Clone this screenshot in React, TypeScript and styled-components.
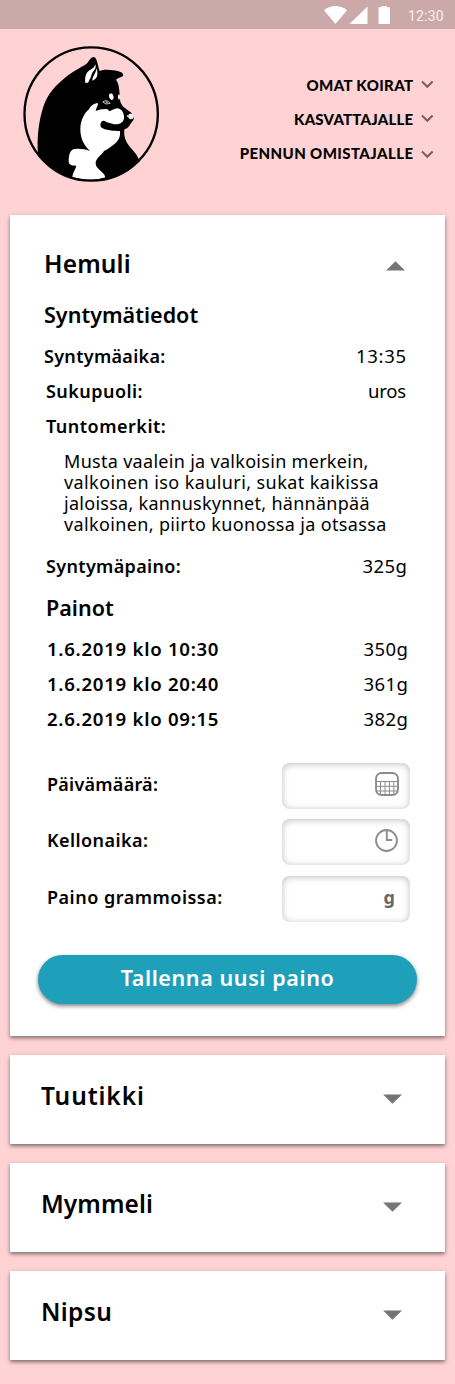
import React from "react";
import styled, { createGlobalStyle } from "styled-components";

const GlobalStyle = createGlobalStyle`
  * { box-sizing: border-box; }
  body {
    margin: 0;
    background: #ffd3d3;
    color: #000;
    font-family: "Noto Sans", "Open Sans", sans-serif;
  }
`;

const Page = styled.div`
  width: 455px;
  height: 1384px;
  background: #ffd3d3;
  overflow: hidden;
`;

const StatusBar = styled.div`
  height: 29px;
  background: #cba9a8;
  display: flex;
  align-items: flex-start;
  justify-content: flex-end;
  padding-right: 11px;
`;

const Clock = styled.span`
  width: 36px;
  margin-left: 16px;
  color: #f7efef;
  font: 400 14px/32px Roboto, sans-serif;
  letter-spacing: 0.2px;
  white-space: nowrap;
`;

const Header = styled.header`
  height: 186px;
  display: flex;
  justify-content: space-between;
  padding: 11px 21px 0 15px;
`;

const Nav = styled.nav`
  display: flex;
  flex-direction: column;
  align-items: flex-end;
  padding-top: 28px;
`;

const NavLink = styled.a<{ $track: number }>`
  display: flex;
  align-items: center;
  gap: 7.6px;
  height: 34px;
  font: 900 15px/34px Lato, sans-serif;
  letter-spacing: ${(p) => p.$track}px;
  white-space: nowrap;
`;

const Stack = styled.main`
  display: flex;
  flex-direction: column;
  gap: 19px;
  padding: 0 10px;
`;

const Card = styled.section<{ $open?: boolean }>`
  height: ${(p) => (p.$open ? 821 : 89)}px;
  padding: ${(p) => (p.$open ? "29px 28px 0" : "21px 43px 0 31px")};
  background: #fff;
  box-shadow: 0 2px 4px rgba(0, 0, 0, 0.5);
`;

const CardHead = styled.div<{ $open?: boolean }>`
  display: flex;
  justify-content: space-between;
  align-items: center;
  height: 40px;
  padding: ${(p) => (p.$open ? "0 12px 0 6px" : "0")};

  svg {
    margin-top: ${(p) => (p.$open ? 3 : 6)}px;
  }
`;

const Title = styled.h2<{ $track: number }>`
  margin: 0;
  font-size: 24.5px;
  line-height: 40px;
  font-weight: 600;
  letter-spacing: ${(p) => p.$track}px;
`;

const Section = styled.h3<{ $inset: number; $top: number }>`
  margin: ${(p) => p.$top}px 0 7px;
  padding-left: ${(p) => p.$inset}px;
  font-size: 21.5px;
  line-height: 34px;
  font-weight: 600;
  letter-spacing: 0.02px;
`;

const Row = styled.div<{ $inset: number; $end: number }>`
  display: flex;
  justify-content: space-between;
  height: 34px;
  margin-bottom: 1px;
  padding: 0 ${(p) => p.$end}px 0 ${(p) => p.$inset}px;
  line-height: 34px;
  font-size: 18.5px;
`;

const Label = styled.span<{ $track?: number; $size?: number }>`
  font-size: ${(p) => p.$size ?? 18}px;
  font-weight: 600;
  letter-spacing: ${(p) => p.$track ?? 0.3}px;
`;

const Value = styled.span<{ $track?: number }>`
  letter-spacing: ${(p) => p.$track ?? 0.5}px;
  margin-right: -${(p) => Math.max(p.$track ?? 0.5, 0)}px;
`;

const Description = styled.p`
  margin: 8px 0 14px;
  padding-left: 26px;
  font-size: 18px;
  line-height: 21px;
  white-space: nowrap;
`;

const Line = styled.span<{ $track: number }>`
  display: block;
  height: 21px;
  letter-spacing: ${(p) => p.$track}px;
`;

const Form = styled.div`
  display: grid;
  row-gap: 10px;
  padding: 26px 7px 0 9px;
`;

const Field = styled.label<{ $gap?: number }>`
  display: flex;
  justify-content: space-between;
  height: 46px;
  margin-top: ${(p) => p.$gap ?? 0}px;
  line-height: 43px;
`;

const InputBox = styled.span<{ $end: number }>`
  display: flex;
  align-items: center;
  justify-content: flex-end;
  width: 128px;
  height: 46px;
  padding: 0 ${(p) => p.$end}px 4px 0;
  border-radius: 8px;
  background: #fff;
  box-shadow: inset 0 1px 7px rgba(0, 0, 0, 0.26);
  color: #666;
  font-size: 18px;
  font-weight: 700;
`;

const SaveButton = styled.button`
  display: block;
  width: 379px;
  height: 49px;
  margin-top: 33px;
  padding: 0 0 4px;
  border: 0;
  border-radius: 25px;
  background: #1fa0ba;
  box-shadow: 0 2px 4px rgba(0, 0, 0, 0.5);
  color: #fff;
  font: 600 21.5px/45px "Noto Sans", sans-serif;
  letter-spacing: 0.6px;
`;

const Logo = () => (
  <svg width="150" height="150" viewBox="0 0 450 450">
    <path d="M69 343C65 290 72 240 85 200C98 160 122 136 150 113C178 92 198 82 213 73C222 66 225 52 236 51C247 53 247 75 254 93C266 88 281 89 294 91C309 93 324 96 325 105C323 112 311 112 303 119C313 130 314 160 315 180C317 198 334 207 347 217C357 224 359 235 354 242C345 250 344 263 328 268C326 288 331 303 342 317C355 333 368 345 371 358C335 405 284 424 229 423C159 421 100 388 69 343Z" />
    <path fill="#fff" d="M248 189C237 190 226 198 222 208C209 219 196 240 196 268C196 298 208 317 225 333C207 326 184 324 172 329C161 336 160 361 162 370C167 378 179 377 184 378C180 391 173 399 172 411C205 421 244 422 271 412C269 395 244 390 242 371C241 355 261 345 267 333C279 328 295 315 305 306C315 295 316 282 315 273C298 273 269 272 258 262C253 250 260 241 267 242C278 248 294 253 307 253C323 250 328 241 327 229C326 214 318 207 307 205C297 206 292 211 282 214C281 208 275 206 267 208C259 207 253 209 242 213C244 203 251 195 248 189Z" />
    <path fill="#fff" d="M211 129C209 110 213 97 225 90C234 86 239 81 241 73C245 86 237 91 232 98C227 107 229 114 223 119C222 124 222 128 211 129Z" />
    <path fill="#fff" d="M245 84C248 96 249 107 243 115C239 119 235 120 233 123C229 113 242 103 245 84Z" />
    <ellipse cx="289" cy="170" rx="6.5" ry="10" fill="#fff" transform="rotate(-15 289 170)" />
    <ellipse cx="312" cy="171" rx="3" ry="8" fill="#fff" />
    <path d="M263 186Q274 176 286 190Q272 196 263 186Z" fill="#222" stroke="#ccc" strokeWidth="2.5" />
    <circle cx="275" cy="187" r="3" fill="#aaa" />
    <circle cx="348" cy="229" r="8.5" fill="#eee" />
    <circle cx="338" cy="228" r="3" fill="#bbb" />
    <circle cx="228.5" cy="222" r="200" fill="none" stroke="#000" strokeWidth="7" />
  </svg>
);

const ChevronIcon = styled.svg<{ $drop: number }>`
  margin-top: ${(p) => p.$drop}px;
`;

const Chevron = ({ drop = -2 }: { drop?: number }) => (
  <ChevronIcon $drop={drop} width="13" height="9" viewBox="0 0 13 9">
    <path d="M1 1.5L6.3 6.8L11.6 1.5" fill="none" stroke="#755f60" strokeWidth="2" />
  </ChevronIcon>
);

const Triangle = ({ up }: { up?: boolean }) => (
  <svg width="19" height="10" viewBox="0 0 19 10">
    <path d={up ? "M0 9.5L9.5 .3L19 9.5Z" : "M0 .5L9.5 9.7L19 .5Z"} fill="#757575" />
  </svg>
);

const StatusIcons = () => (
  <svg width="68" height="29" viewBox="0 0 68 29" fill="#fff">
    <path d="M0 10.2Q11.5 1.8 23 10.2L11.5 24Z" />
    <path d="M43.5 6.5V24H25.5Z" />
    <path d="M54.5 7.2H57.5V6H62.5V7.2H66V24H54.5Z" />
  </svg>
);

const CalendarIcon = () => (
  <svg width="24" height="24" viewBox="0 0 24 24" fill="none" stroke="#8c8c8c">
    <rect x="1" y="1" width="22" height="22" rx="5.5" strokeWidth="1.9" />
    <path d="M1 9.5H23M1 14.3H23M1 19H23M5.5 9.5V23M10 9.5V23M14.4 9.5V23M18.8 9.5V23" strokeWidth="1" />
  </svg>
);

const ClockIcon = () => (
  <svg width="23" height="23" viewBox="0 0 22 22" fill="none" stroke="#8c8c8c" strokeWidth="1.8">
    <circle cx="11" cy="11" r="10" />
    <path d="M11.3 1V10.5H16.5" />
  </svg>
);

const weights = [
  ["1.6.2019 klo 10:30", "350g"],
  ["1.6.2019 klo 20:40", "361g"],
  ["2.6.2019 klo 09:15", "382g"],
];

const puppies = [
  { name: "Tuutikki", track: 0.9 },
  { name: "Mymmeli", track: 0.08 },
  { name: "Nipsu", track: 0.35 },
];

export default function App() {
  return (
    <Page>
      <GlobalStyle />
      <StatusBar>
        <StatusIcons />
        <Clock>12:30</Clock>
      </StatusBar>
      <Header>
        <Logo />
        <Nav>
          <NavLink $track={0.36}>OMAT KOIRAT <Chevron /></NavLink>
          <NavLink $track={0.2}>KASVATTAJALLE <Chevron /></NavLink>
          <NavLink $track={0.4}>PENNUN OMISTAJALLE <Chevron drop={3} /></NavLink>
        </Nav>
      </Header>
      <Stack>
        <Card $open>
          <CardHead $open>
            <Title $track={0.15}>Hemuli</Title>
            <Triangle up />
          </CardHead>
          <Section $inset={6} $top={14}>Syntymätiedot</Section>
          <Row $inset={6} $end={11}><Label $track={0.3}>Syntymäaika:</Label><Value $track={0.65}>13:35</Value></Row>
          <Row $inset={8} $end={11}><Label $track={0.45}>Sukupuoli:</Label><Value $track={-0.2}>uros</Value></Row>
          <Row $inset={8} $end={11}><Label $track={0.5}>Tuntomerkit:</Label></Row>
          <Description>
            <Line $track={0.3}>Musta vaalein ja valkoisin merkein,</Line>
            <Line $track={0.41}>valkoinen iso kauluri, sukat kaikissa</Line>
            <Line $track={0.28}>jaloissa, kannuskynnet, hännänpää</Line>
            <Line $track={0.36}>valkoinen, piirto kuonossa ja otsassa</Line>
          </Description>
          <Row $inset={8} $end={10}><Label $track={0.33}>Syntymäpaino:</Label><Value>325g</Value></Row>
          <Section $inset={8} $top={8}>Painot</Section>
          {weights.map(([when, grams]) => (
            <Row key={when} $inset={9} $end={9}><Label $size={18.6} $track={0.73}>{when}</Label><Value>{grams}</Value></Row>
          ))}
          <Form>
            <Field><Label $track={0.25}>Päivämäärä:</Label><InputBox $end={11}><CalendarIcon /></InputBox></Field>
            <Field><Label $track={0.42}>Kellonaika:</Label><InputBox $end={12.5}><ClockIcon /></InputBox></Field>
            <Field $gap={1}><Label $track={0.5}>Paino grammoissa:</Label><InputBox $end={15}>g</InputBox></Field>
          </Form>
          <SaveButton>Tallenna uusi paino</SaveButton>
        </Card>
        {puppies.map(({ name, track }) => (
          <Card key={name}>
            <CardHead>
              <Title $track={track}>{name}</Title>
              <Triangle />
            </CardHead>
          </Card>
        ))}
      </Stack>
    </Page>
  );
}
